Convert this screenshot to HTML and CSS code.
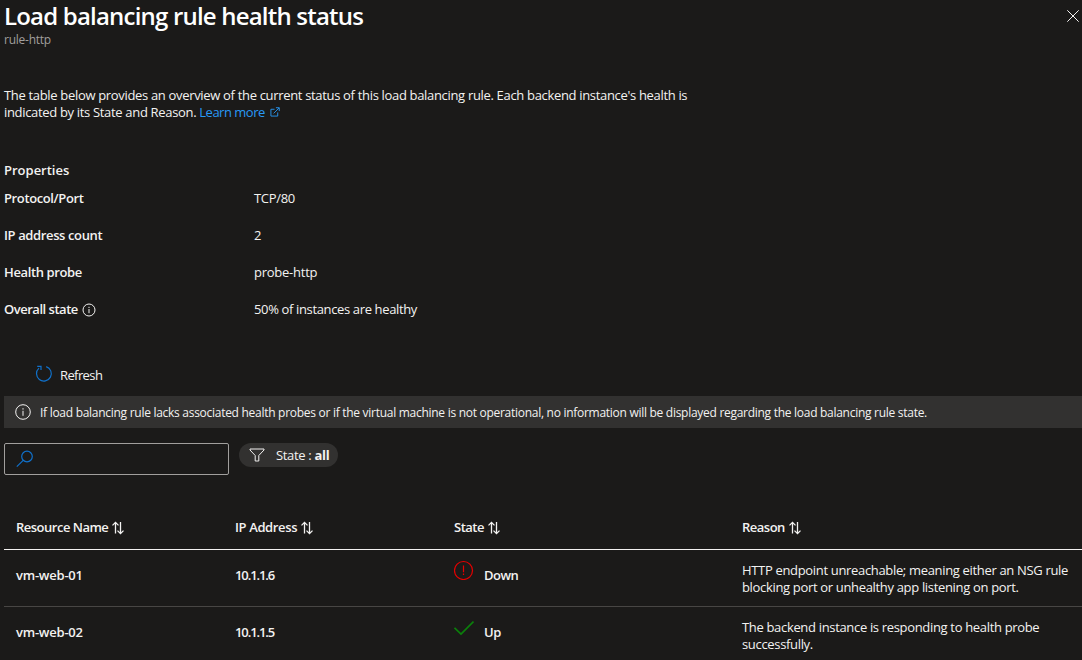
FILE: index.html
```html
<!DOCTYPE html>
<html lang="en">
  <head>
    <meta charset="UTF-8" />
    <title>Load balancing rule health status</title>
    <meta name="viewport" content="width=device-width, initial-scale=1.0" />
    <link rel="stylesheet" href="styles.css">
  </head>
  <body>
    <!-- Shared sort arrows -->
    <svg class="symbols" width="0" height="0">
      <symbol id="sort" viewBox="0 0 12 14">
        <path d="M3.5 12.5V1.5M0.5 4.4L3.5 1.4L6.5 4.4M8.5 1V12.4M5.5 9.6L8.5 12.6L11.5 9.6" />
      </symbol>
    </svg>

    <header class="blade-header">
      <div>
        <h1>Load balancing rule health status</h1>
        <p class="subtitle">rule-http</p>
      </div>
      <button class="close" aria-label="Close">
        <svg width="12" height="12" viewBox="0 0 12 12"><path d="M0.3 0.3L11.7 11.7M11.7 0.3L0.3 11.7" /></svg>
      </button>
    </header>

    <main>
      <p class="intro">
        The table below provides an overview of the current status of this load balancing rule. Each backend instance's health is<br>
        indicated by its State and Reason.
        <a href="#">Learn more<svg width="10" height="10" viewBox="0 0 11 11"><path d="M5 2.5H1V10H8.5V6M4 7L10 1M6.5 0.8H10.2V4.5" /></svg></a>
      </p>

      <!-- PROPERTIES -->
      <section class="properties">
        <h2>Properties</h2>
        <dl>
          <dt>Protocol/Port</dt>
          <dd>TCP/80</dd>
          <dt>IP address count</dt>
          <dd>2</dd>
          <dt>Health probe</dt>
          <dd class="probe">probe-http</dd>
          <dt class="overall">Overall state
            <svg width="14" height="14" viewBox="0 0 14 14"><circle cx="7" cy="7" r="6" /><path d="M7 6V10.2M7 3.8V5" /></svg>
          </dt>
          <dd class="overall-value">50% of instances are healthy</dd>
        </dl>
      </section>

      <button class="refresh">
        <svg width="18" height="18" viewBox="0 0 18 18"><path d="M4 3.1A7.4 7.4 0 1 0 11.2 1.6M2.2 1.3H6V5" /></svg>
        <span>Refresh</span>
      </button>

      <div class="info-bar">
        <svg width="16" height="16" viewBox="0 0 16 16"><circle cx="8" cy="8" r="7.3" /><path d="M8 6.8V11.8M8 4.2V5.6" /></svg>
        <span>If load balancing rule lacks associated health probes or if the virtual machine is not operational, no information will be displayed regarding the load balancing rule state.</span>
      </div>

      <!-- FILTERS -->
      <div class="filters">
        <label class="search">
          <svg width="18" height="18" viewBox="0 0 18 18"><circle cx="11" cy="6.5" r="5.3" /><path d="M7.2 10.3L0.8 16.7" /></svg>
          <input type="text" aria-label="Search">
        </label>
        <button class="pill">
          <svg width="16" height="14" viewBox="0 0 16 14"><path d="M1 1H15V2L9.8 7.5V13H6.2V7.5L1 2Z" /></svg>
          <span>State : <b>all</b></span>
        </button>
      </div>

      <!-- INSTANCES -->
      <div class="table">
        <div class="row head">
          <div>Resource Name<svg><use href="#sort" /></svg></div>
          <div class="ip">IP Address<svg><use href="#sort" /></svg></div>
          <div>State<svg><use href="#sort" /></svg></div>
          <div>Reason<svg><use href="#sort" /></svg></div>
        </div>
        <div class="row">
          <div class="vm">vm-web-01</div>
          <div class="address">10.1.1.6</div>
          <div class="state down">
            <svg width="20" height="20" viewBox="0 0 20 20"><circle cx="9.5" cy="10.5" r="9" /><path d="M9.5 5.5V12.3M9.5 13.5V15" /></svg>
            <span>Down</span>
          </div>
          <div class="reason">
            HTTP endpoint unreachable; meaning either an NSG rule<br>
            blocking port or unhealthy app listening on port.
          </div>
        </div>
        <div class="row">
          <div class="vm">vm-web-02</div>
          <div class="address">10.1.1.5</div>
          <div class="state up">
            <svg width="20" height="20" viewBox="0 0 20 20"><path d="M0.5 10.8L7 17L19.5 4.5" /></svg>
            <span>Up</span>
          </div>
          <div class="reason">
            The backend instance is responding to health probe<br>
            successfully.
          </div>
        </div>
      </div>
    </main>
  </body>
</html>
```
FILE: styles.css
```css
* {
  margin: 0;
  padding: 0;
  box-sizing: border-box;
}
:root {
  --bg: #1b1a19;
  --panel: #323130;
  --text: #f3f2f1;
  --link: #2899f5;
  --icon-blue: #1071cb;
}
body {
  height: 660px;
  overflow: hidden;
  background: var(--bg);
  color: var(--text);
  font: 13px/17px "Open Sans", "Noto Sans", sans-serif;
  letter-spacing: -0.325px;
  white-space: nowrap;
}
svg {
  flex: none;
  fill: none;
  stroke: currentColor;
}
.symbols {
  position: absolute;
}
button {
  border: none;
  background: none;
  color: inherit;
  font: inherit;
  letter-spacing: inherit;
}

/* HEADER */
.blade-header {
  display: flex;
  justify-content: space-between;
  height: 87px;
  padding-left: 4px;
}
h1 {
  font-size: 24px;
  font-weight: 600;
  line-height: 31px;
  letter-spacing: -0.8px;
  color: #fff;
}
.subtitle {
  font-size: 12px;
  line-height: 17px;
  letter-spacing: -0.25px;
  color: #a19f9d;
}
.close {
  height: 12px;
  margin: 10px 3px 0 0;
}
.close svg {
  display: block;
}

main {
  padding-left: 4px;
}
.intro {
  height: 74px;
}
.intro a {
  color: var(--link);
  letter-spacing: -0.5px;
  text-decoration: none;
}
.intro a svg {
  margin-left: 5px;
}

/* PROPERTIES */
h2 {
  font-size: 13px;
  font-weight: 600;
  line-height: 18px;
  letter-spacing: 0;
}
dl {
  display: grid;
  grid-template-columns: 250px 1fr;
  grid-auto-rows: 37px;
  padding-top: 11px;
}
dt {
  display: flex;
  align-items: flex-start;
  gap: 4px;
  font-weight: 600;
  letter-spacing: -0.38px;
}
dt svg {
  margin-top: 2px;
}
.overall {
  letter-spacing: -0.48px;
}
.probe {
  letter-spacing: -0.25px;
}
.overall-value {
  letter-spacing: -0.36px;
}
.refresh {
  display: flex;
  align-items: center;
  gap: 7px;
  height: 18px;
  margin: 28px 0 0 31px;
  letter-spacing: -0.6px;
}
.refresh svg {
  color: var(--icon-blue);
  stroke-width: 1.2;
  margin-top: -3px;
}
.info-bar {
  display: flex;
  align-items: center;
  gap: 9px;
  height: 32px;
  margin-top: 12px;
  padding-left: 11px;
  background: var(--panel);
  font-size: 12px;
  letter-spacing: -0.28px;
}

/* FILTERS */
.filters {
  display: flex;
  align-items: flex-start;
  gap: 10px;
  margin-top: 15px;
}
.search {
  display: flex;
  align-items: center;
  width: 225px;
  height: 32px;
  padding-left: 11px;
  border: 1px solid #a19f9d;
  border-radius: 2px;
}
.search svg {
  color: var(--icon-blue);
  stroke-width: 1.2;
}
.search input {
  width: 180px;
  border: none;
  outline: none;
  background: none;
  color: inherit;
}
.pill {
  display: flex;
  align-items: center;
  gap: 11px;
  width: 99px;
  height: 24px;
  padding-left: 10px;
  border-radius: 12px;
  background: var(--panel);
}

/* TABLE */
.table {
  margin-top: 31px;
}
.row {
  display: grid;
  grid-template-columns: 219px 219px 288px 1fr;
  height: 57px;
  padding: 12px 0 0 12px;
  border-bottom: 1px solid #484644;
  font-weight: 600;
}
.row:last-child {
  border-bottom: none;
}
.head {
  height: 44px;
  padding-top: 13px;
  border-bottom-color: var(--text);
  letter-spacing: -0.5px;
}
.head div {
  display: flex;
  gap: 4px;
}
.head .ip {
  letter-spacing: -0.38px;
}
.head svg {
  width: 12px;
  height: 14px;
  margin-top: 2px;
  stroke-width: 1.3;
}
.vm,
.address,
.state span {
  padding-top: 5px;
}
.vm {
  letter-spacing: -0.22px;
}
.address {
  letter-spacing: -1.1px;
}
.state {
  display: flex;
  align-items: flex-start;
  gap: 10px;
  letter-spacing: -0.5px;
}
.state svg {
  margin-top: -2px;
  stroke-width: 1.2;
}
.down svg {
  color: #e60000;
}
.up svg {
  color: #0b800b;
  stroke-width: 1.7;
}
.reason {
  font-weight: 400;
  letter-spacing: -0.33px;
}
```
